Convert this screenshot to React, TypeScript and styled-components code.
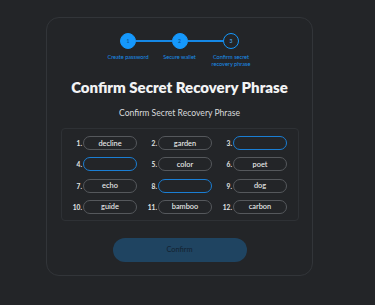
import React from 'react';
import styled, { createGlobalStyle } from 'styled-components';

const WORDS: { word: string; empty?: boolean }[] = [
  { word: 'decline' },
  { word: 'garden' },
  { word: '', empty: true },
  { word: '', empty: true },
  { word: 'color' },
  { word: 'poet' },
  { word: 'echo' },
  { word: '', empty: true },
  { word: 'dog' },
  { word: 'guide' },
  { word: 'bamboo' },
  { word: 'carbon' },
];

const STEPS = [
  { n: 1, label: 'Create password', done: true },
  { n: 2, label: 'Secure wallet', done: true },
  { n: 3, label: 'Confirm secret\nrecovery phrase', done: false },
];

export default function App() {
  return (
    <>
      <GlobalStyle />
      <Page>
        <Card>
          <Stepper>
            <CircleRow>
              {STEPS.map((s, idx) => (
                <React.Fragment key={s.n}>
                  {idx > 0 && <Connector />}
                  <Circle done={s.done}>{s.n}</Circle>
                </React.Fragment>
              ))}
            </CircleRow>
            <LabelRow>
              {STEPS.map((s) => (
                <StepLabel key={s.n}>{s.label}</StepLabel>
              ))}
            </LabelRow>
          </Stepper>

          <Title>Confirm Secret Recovery Phrase</Title>
          <Subtitle>Confirm Secret Recovery Phrase</Subtitle>

          <WordBox>
            {WORDS.map((w, idx) => (
              <Cell key={idx}>
                <Num>{idx + 1}.</Num>
                <Pill empty={!!w.empty}>{w.word}</Pill>
              </Cell>
            ))}
          </WordBox>

          <ConfirmButton disabled>Confirm</ConfirmButton>
        </Card>
      </Page>
    </>
  );
}

const GlobalStyle = createGlobalStyle`
  html, body {
    margin: 0;
    padding: 0;
    background: #232528;
  }
  body {
    font-family: Lato, "Noto Sans", sans-serif;
    -webkit-font-smoothing: antialiased;
  }
`;

const Page = styled.div`
  width: 375px;
  height: 305px;
  padding: 17px 0 0 46px;
  box-sizing: border-box;
`;

const Card = styled.div`
  width: 267px;
  height: 259px;
  box-sizing: border-box;
  border: 1px solid #323539;
  border-radius: 13px;
  padding: 15px 0 0;
  display: flex;
  flex-direction: column;
  align-items: center;
`;

const Stepper = styled.div`
  display: flex;
  flex-direction: column;
  align-items: center;
`;

const CircleRow = styled.div`
  display: flex;
  align-items: center;
`;

const Circle = styled.div<{ done: boolean }>`
  width: 16px;
  height: 16px;
  box-sizing: border-box;
  border-radius: 50%;
  display: flex;
  align-items: center;
  justify-content: center;
  font-size: 5px;
  font-weight: 700;
  background: ${(p) => (p.done ? '#1598fc' : '#232528')};
  border: 1px solid #1598fc;
  color: ${(p) => (p.done ? '#0b5a9c' : '#4a9fe0')};
`;

const Connector = styled.div`
  width: 35.5px;
  height: 1.5px;
  background: #1588e6;
`;

const LabelRow = styled.div`
  display: grid;
  grid-template-columns: repeat(3, 51.5px);
  margin-top: 4px;
`;

const StepLabel = styled.div`
  font-size: 5.6px;
  line-height: 7px;
  color: #1a8fe8;
  text-align: center;
  white-space: pre;
  justify-self: center;
`;

const Title = styled.h1`
  margin: 11px 0 0;
  font-size: 15px;
  line-height: 18px;
  font-weight: 800;
  color: #f2f3f4;
`;

const Subtitle = styled.h2`
  margin: 11px 0 0;
  font-size: 8.6px;
  line-height: 12px;
  font-weight: 400;
  color: #d8dadc;
`;

const WordBox = styled.div`
  margin-top: 9px;
  width: 238px;
  height: 93px;
  box-sizing: border-box;
  border: 1px solid #2e3135;
  border-radius: 4px;
  padding: 7px 0 0;
  display: grid;
  grid-template-columns: repeat(3, 65px);
  grid-auto-rows: 14px;
  row-gap: 7.3px;
  column-gap: 10px;
  justify-content: center;
`;

const Cell = styled.div`
  display: flex;
  align-items: center;
`;

const Num = styled.span`
  width: 10px;
  margin-right: 1px;
  text-align: right;
  font-size: 6.6px;
  font-weight: 700;
  color: #e4e5e6;
  white-space: nowrap;
`;

const Pill = styled.div<{ empty: boolean }>`
  width: 54px;
  height: 14px;
  box-sizing: border-box;
  border-radius: 7px;
  border: ${(p) => (p.empty ? '1.4px solid #1a7ed4' : '1px solid #55585c')};
  display: flex;
  align-items: center;
  justify-content: center;
  font-size: 7.4px;
  font-weight: 500;
  color: #eceded;
`;

const ConfirmButton = styled.button`
  margin-top: 16.5px;
  width: 134px;
  height: 24px;
  border: none;
  border-radius: 12px;
  background: #1f4461;
  color: #132230;
  font-family: inherit;
  font-size: 7.4px;
  padding: 0;
`;
